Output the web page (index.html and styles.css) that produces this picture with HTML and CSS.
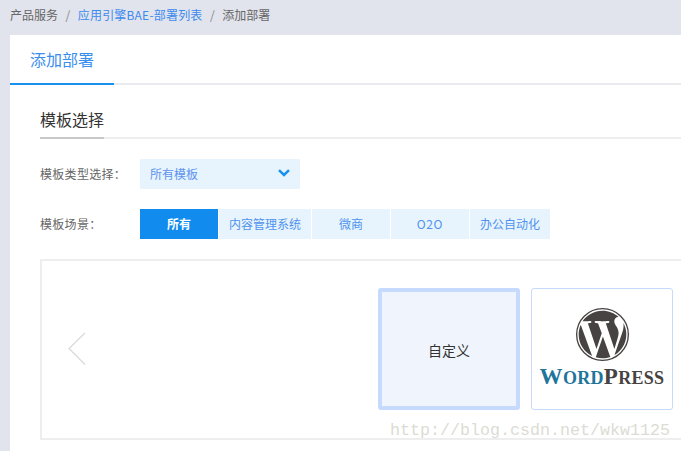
FILE: index.html
```html
<!DOCTYPE html>
<html lang="zh-CN">
<head>
<meta charset="utf-8">
<title>添加部署</title>
<link rel="stylesheet" href="styles.css">
</head>
<body>
<nav class="crumbs">
  <span>产品服务</span><i>/</i><a>应用引擎BAE-部署列表</a><i>/</i><span>添加部署</span>
</nav>
<main class="card">
  <div class="tabs"><div class="tab">添加部署</div></div>
  <section class="body">
    <div class="heading"><h2>模板选择</h2></div>
    <div class="row first">
      <label>模板类型选择：</label>
      <div class="select"><span>所有模板</span>
        <svg width="12" height="8" viewBox="0 0 12 8"><path d="M1 1.200 6 6l5-4.800" fill="none" stroke="#1890f0" stroke-width="2.500"/></svg>
      </div>
    </div>
    <div class="row second">
      <label>模板场景：</label>
      <div class="seg">
        <div class="on w78">所有</div><div class="w92">内容管理系统</div><div class="w78">微商</div><div class="w78 latin">O2O</div><div class="w80">办公自动化</div>
      </div>
    </div>
    <div class="carousel">
      <svg class="prev" width="20" height="34" viewBox="0 0 20 34"><path d="M18 1 2 16.500 18 32.500" fill="none" stroke="#d9d9d9" stroke-width="1.200"/></svg>
      <div class="tile custom">自定义</div>
      <div class="tile wp">
        <svg width="53" height="53" viewBox="0 0 24 24">
          <circle cx="12" cy="12" r="11.700" fill="#fff" stroke="#464342" stroke-width=".6"/>
          <path fill="#464342" d="M21.469 6.825c.84 1.537 1.318 3.3 1.318 5.175 0 3.979-2.156 7.456-5.363 9.325l3.295-9.527c.615-1.54.82-2.771.82-3.864 0-.405-.026-.78-.07-1.11m-7.981.105c.647-.03 1.232-.105 1.232-.105.582-.075.514-.93-.067-.899 0 0-1.755.135-2.88.135-1.064 0-2.85-.15-2.85-.15-.585-.03-.661.855-.075.885 0 0 .54.061 1.125.09l1.68 4.605-2.37 7.08L5.354 6.9c.649-.03 1.234-.1 1.234-.1.585-.075.516-.93-.065-.896 0 0-1.746.138-2.874.138-.2 0-.438-.008-.69-.015C4.911 3.15 8.235 1.215 12 1.215c2.809 0 5.365 1.072 7.286 2.833-.046-.003-.091-.009-.141-.009-1.06 0-1.812.923-1.812 1.914 0 .89.513 1.643 1.06 2.531.411.72.89 1.643.89 2.977 0 .915-.354 1.994-.821 3.479l-1.075 3.585-3.9-11.61.001.014zM12 22.784c-1.059 0-2.081-.153-3.048-.437l3.237-9.406 3.315 9.087c.024.053.05.101.078.149-1.12.393-2.325.609-3.582.609M1.211 12c0-1.564.336-3.05.935-4.39L7.29 21.709C3.694 19.96 1.212 16.271 1.212 12"/>
        </svg>
        <div class="wordmark"><b>W<small>ORD</small></b><span>P<small>RESS</small></span></div>
      </div>
    </div>
  </section>
</main>
<div class="watermark">http://blog.csdn.net/wkw1125</div>
</body>
</html>
```

FILE: styles.css
```css
* { box-sizing: border-box; }
html, body { margin: 0; height: 100%; }
body {
  width: 681px; height: 451px; overflow: hidden; position: relative;
  background: #e1e4ec; padding-left: 10px;
  font-family: "Noto Sans CJK SC", "Liberation Sans", sans-serif;
  font-size: 12px; color: #666;
}
.crumbs {
  height: 35px; padding-bottom: 6px;
  display: flex; align-items: center; color: #666;
}
.crumbs i { font-style: normal; color: #888; margin: 0 7.500px; }
.crumbs a { color: #3d8bee; letter-spacing: .2px; }
.card { background: #fff; height: 416px; width: 671px; }
.tabs { height: 50px; border-bottom: 2px solid #e9ebef; display: flex; }
.tab {
  width: 104px; height: 50px; border-bottom: 2px solid #1890ee;
  color: #3a8eee; font-size: 16px; padding-left: 20px;
  line-height: 48px;
}
.body { padding: 0 0 0 30px; }
.heading { margin-top: 23px; height: 31px; border-bottom: 2px solid #eeeeee; }
.heading h2 {
  margin: 0; width: 64px; height: 31px; border-bottom: 2px solid #c8c8c8;
  font-size: 16px; font-weight: 400; color: #333; line-height: 22px;
}
.row { display: flex; align-items: center; height: 30px; }
.row.first { margin-top: 20px; }
.row.second { margin-top: 20px; }
.row label { width: 100px; letter-spacing: .3px; color: #666; padding-bottom: 2px; }
.select {
  width: 160px; height: 30px; background: #e7f4fd; color: #5c93ee;
  display: flex; align-items: center; justify-content: space-between;
  padding: 0 10px 2px;
}
.seg { display: flex; gap: 1px; }
.seg div {
  height: 30px; background: #e7f4fd; color: #4f93ee; padding-bottom: 2px;
  display: flex; align-items: center; justify-content: center;
}
.seg .on { background: #118cee; color: #fff; font-weight: 700; }
.seg .latin { letter-spacing: .6px; }
.w78 { width: 78px; }
.w92 { width: 92px; }
.w80 { width: 80px; }
.carousel {
  margin-top: 20px; width: 660px; height: 181px; border: 2px solid #eeeeee; border-right: 0;
  display: flex; align-items: flex-start; gap: 11px; padding: 27px 0 0 336px;
  position: relative;
}
.prev { position: absolute; left: 25px; top: 71px; }
.tile {
  width: 142px; height: 122px; border-radius: 3px; flex: none;
  display: flex; flex-direction: column; align-items: center; justify-content: center;
}
.custom { background: #f0f5fd; border: 4px solid #c5dafc; color: #333; font-size: 14px; padding-top: 2px; }
.wp { border: 1px solid #c5dafc; background: #fff; justify-content: flex-start; padding-top: 19px; }
.wordmark {
  font-family: "Liberation Serif", serif; font-size: 23px; line-height: 20px; font-weight: 700;
  margin-top: 6px; white-space: nowrap; letter-spacing: .3px; display: flex;
}
.wordmark b { color: #21759b; }
.wordmark span { color: #464342; }
.wordmark small { font-size: 18px; }
.watermark {
  position: absolute; left: 390px; top: 421px;
  font-family: "Liberation Mono", monospace; font-size: 16.670px; line-height: 20px;
  color: #dcdcd4; white-space: nowrap;
}
```
